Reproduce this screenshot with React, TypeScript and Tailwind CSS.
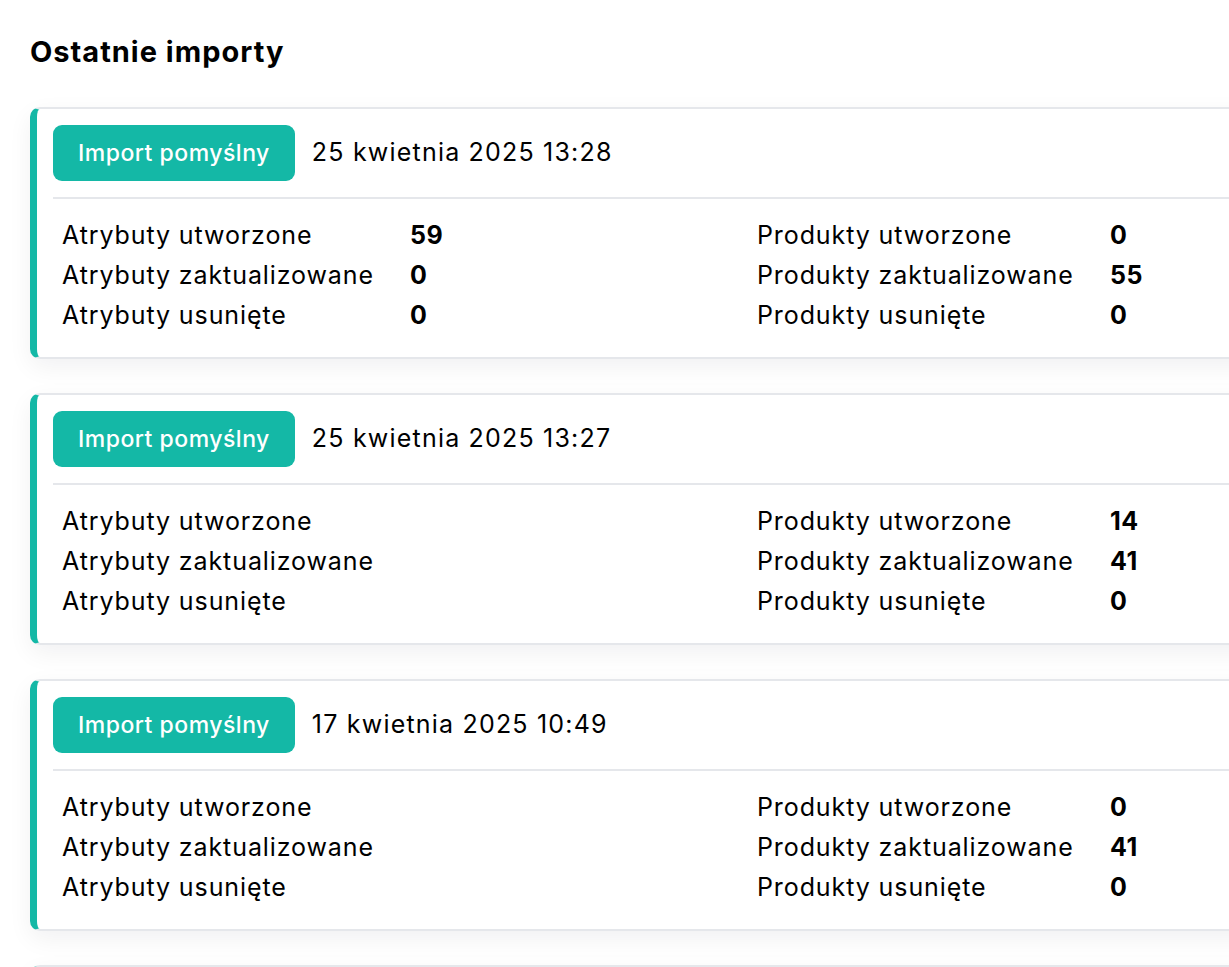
import React from "react";

type Imp = {
  date: string;
  attrs: [string, string, string];
  prods: [string, string, string];
};

const data: Imp[] = [
  { date: "25 kwietnia 2025 13:28", attrs: ["59", "0", "0"], prods: ["0", "55", "0"] },
  { date: "25 kwietnia 2025 13:27", attrs: ["", "", ""], prods: ["14", "41", "0"] },
  { date: "17 kwietnia 2025 10:49", attrs: ["", "", ""], prods: ["0", "41", "0"] },
  { date: "17 kwietnia 2025 10:48", attrs: ["", "", ""], prods: ["0", "41", "0"] },
];

const attrLabels = ["Atrybuty utworzone", "Atrybuty zaktualizowane", "Atrybuty usunięte"];
const prodLabels = ["Produkty utworzone", "Produkty zaktualizowane", "Produkty usunięte"];

function Card({ imp }: { imp: Imp }) {
  return (
    <div className="w-[1500px] shrink-0 bg-white rounded-[10px] border-t-2 border-b-2 border-r-2 border-[#e5e7eb] border-l-[7px] border-l-[#14b8a6] shadow-[0_8px_24px_rgba(17,24,39,0.06)] pl-[16px] pr-4 pt-[16px] pb-[21px]">
      <div className="flex items-center gap-[17px]">
        <span className="h-[56px] px-[25px] rounded-[9px] bg-[#14b8a6] text-white text-[23px] tracking-[0.5px] font-medium flex items-center">
          Import pomyślny
        </span>
        <span className="text-[25px] tracking-[1.2px] text-black">{imp.date}</span>
      </div>
      <div className="h-[2px] bg-[#e5e7eb] mt-[16px] mb-[17px]" />
      <div className="flex pl-[9px]">
        <div className="w-[695px] shrink-0 grid grid-cols-[348px_1fr]">
          {attrLabels.map((l, i) => (
            <React.Fragment key={l}>
              <div className="h-[40px] flex items-center text-[25px] tracking-[0.9px] text-black">{l}</div>
              <div className="h-[40px] flex items-center text-[25px] tracking-[0.5px] font-bold text-black">{imp.attrs[i]}</div>
            </React.Fragment>
          ))}
        </div>
        <div className="w-[695px] shrink-0 grid grid-cols-[353px_1fr]">
          {prodLabels.map((l, i) => (
            <React.Fragment key={l}>
              <div className="h-[40px] flex items-center text-[25px] tracking-[0.9px] text-black">{l}</div>
              <div className="h-[40px] flex items-center text-[25px] tracking-[0.5px] font-bold text-black">{imp.prods[i]}</div>
            </React.Fragment>
          ))}
        </div>
      </div>
    </div>
  );
}

export default function App() {
  return (
    <div
      className="w-[1229px] h-[967px] overflow-hidden bg-white pl-[30px] pt-[30px]"
      style={{ fontFamily: "Inter, 'Noto Sans', sans-serif" }}
    >
      <h1 className="text-[29px] tracking-[1px] font-bold text-black leading-[44px] mb-[33px]">Ostatnie importy</h1>
      <div className="flex flex-col gap-[34px]">
        {data.map((imp, i) => (
          <Card key={i} imp={imp} />
        ))}
      </div>
    </div>
  );
}
